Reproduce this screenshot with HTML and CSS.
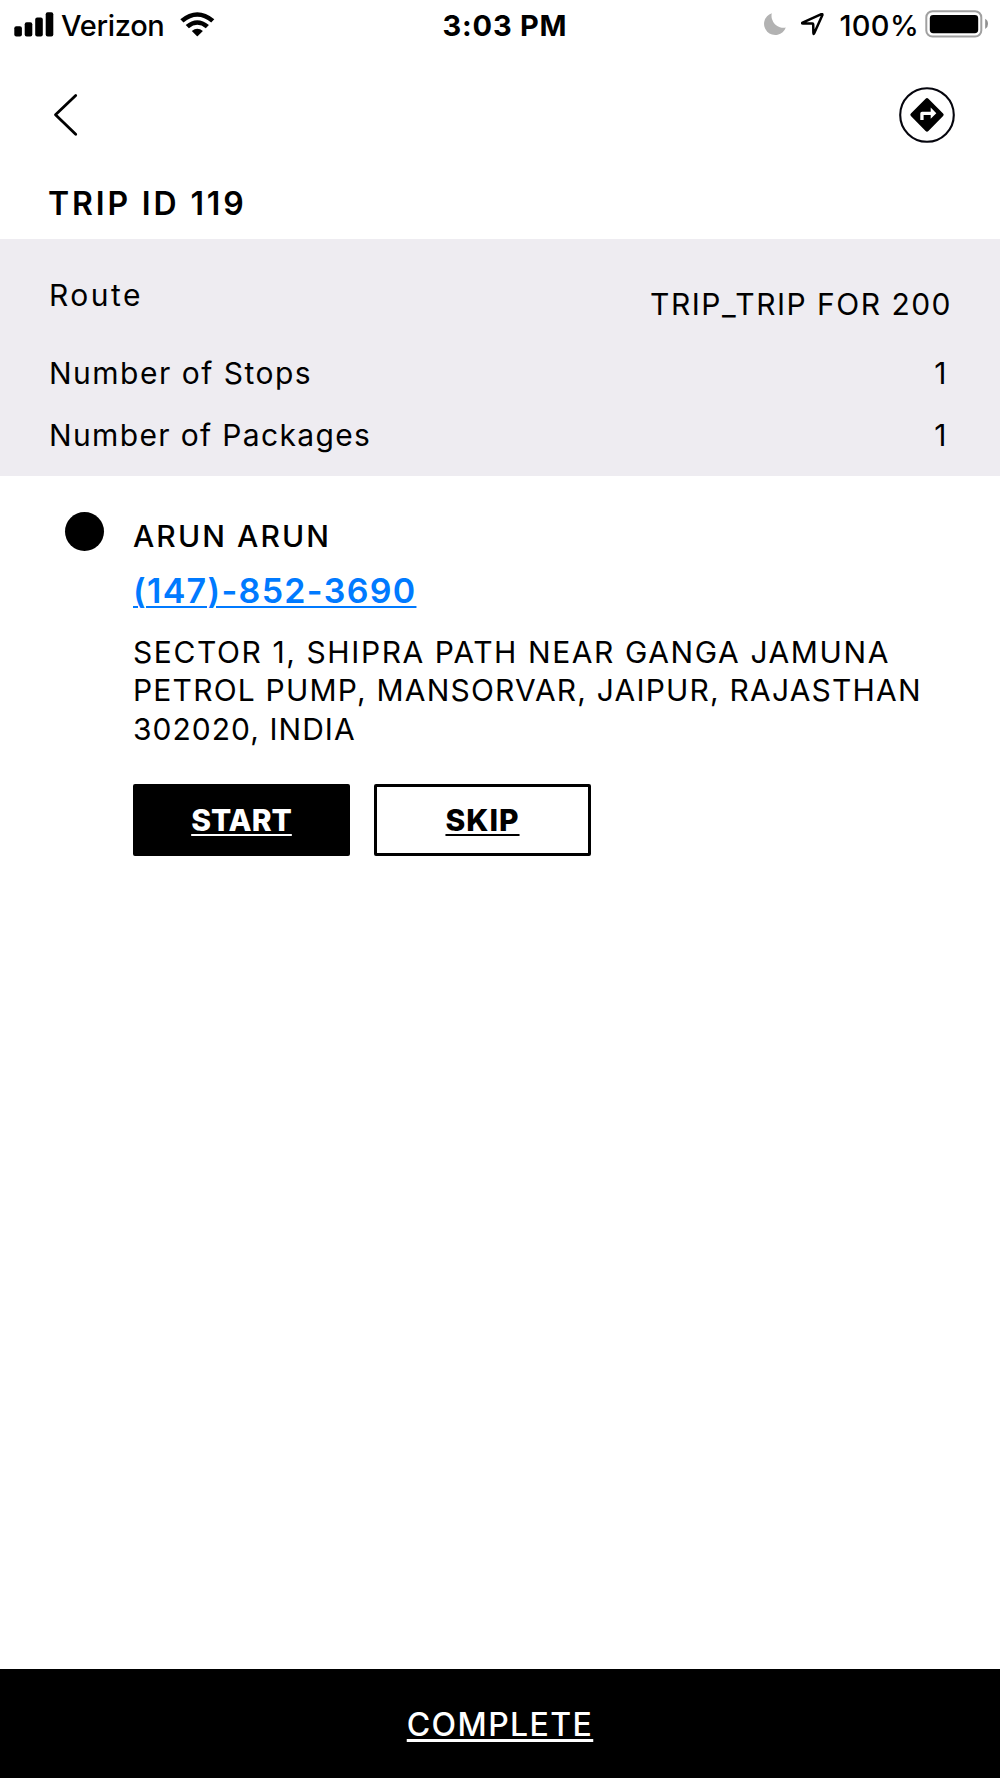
FILE: index.html
```html
<!DOCTYPE html>
<html lang="en">
<head>
<meta charset="utf-8">
<title>Trip ID 119</title>
<link rel="stylesheet" href="styles.css">
</head>
<body>
<div class="screen">
  <header class="status">
    <div class="status-left">
      <svg class="signal" width="40" height="25" viewBox="0 0 40 25"><rect x="0.3" y="14.3" width="7.6" height="10.2" rx="2"/><rect x="10.7" y="10.2" width="7.6" height="14.3" rx="2"/><rect x="21.2" y="5.4" width="7.6" height="19.1" rx="2"/><rect x="31.7" y="0.3" width="7.6" height="24.2" rx="2"/></svg>
      <span class="carrier">Verizon</span>
      <svg class="wifi" width="35" height="25" viewBox="0 0 35 25"><path d="M0.3 7.2 Q17.3 -6.8 34.3 7.2 L31.2 10.6 Q17.3 -1 3.5 10.6Z"/><path d="M5.7 13 Q17.3 3.6 28.9 13 L25.8 16.3 Q17.3 9.4 8.9 16.3Z"/><path d="M11.8 19 Q17.3 14.6 22.9 19 L17.8 24.1 Q17.3 24.5 16.8 24.1Z"/></svg>
    </div>
    <span class="time">3:03 PM</span>
    <div class="status-right">
      <svg class="moon" width="22" height="23" viewBox="0 0 22 23"><path d="M7.8 0.2 A11.2 11.2 0 1 0 21.8 14.6 A12 12 0 0 1 7.8 0.2Z"/></svg>
      <svg class="location" width="23" height="23" viewBox="0 0 23 23"><path d="M1.6 9.7 L19.8 1.3 Q22 0.4 21.2 2.6 L13.2 20.2 Q12.5 21.8 12.4 20 L12.2 11.3 Q12.2 10.6 11.5 10.6 L2 10.5 Q0.3 10.3 1.6 9.7Z"/></svg>
      <span class="percent">100%</span>
      <svg class="battery" width="64" height="28" viewBox="0 0 64 28"><rect x="1.3" y="1.2" width="55" height="25.4" rx="6.2" fill="none" stroke="#a0a0a0" stroke-width="2"/><rect x="4.8" y="5" width="48.4" height="18.2" rx="3.4"/><path d="M60.2 8.8 Q63 10.4 63 13.9 Q63 17.4 60.2 19Z" fill="#909090"/></svg>
    </div>
  </header>
  <nav class="nav">
    <svg width="26" height="44" viewBox="0 0 26 44"><path class="chevron" d="M23.7 2.5 L3.5 21.8 L23.7 41.2"/></svg>
    <svg width="56" height="56" viewBox="0 0 56 56"><circle cx="28" cy="28" r="26.8" fill="none" stroke="#05050d" stroke-width="2.1"/><path d="M26.6 11.7 Q28 10.3 29.4 11.7 L44.1 26.5 Q45.4 27.8 44.1 29.1 L29.4 44 Q28 45.4 26.6 44 L11.9 29.1 Q10.6 27.8 11.9 26.5Z"/><path d="M21.3 32.9 V26.4 Q21.3 24.7 23 24.7 H31.7 V20.6 L37.3 26.2 L31.7 31.7 V28 H24.6 V32.9Z" fill="#fff"/></svg>
  </nav>
  <h1 class="title">TRIP ID 119</h1>
  <dl class="summary">
    <div class="row row-route"><dt class="route-label">Route</dt><dd class="route-name">TRIP_TRIP FOR 200</dd></div>
    <div class="row"><dt>Number of Stops</dt><dd class="count">1</dd></div>
    <div class="row"><dt class="packages-label">Number of Packages</dt><dd class="count">1</dd></div>
  </dl>
  <main class="stop">
    <span class="dot"></span>
    <div class="details">
      <h2 class="name">ARUN ARUN</h2>
      <a class="phone">(147)-852-3690</a>
      <p class="address"><span class="line-1">SECTOR 1, SHIPRA PATH NEAR GANGA JAMUNA</span><br><span class="line-2">PETROL PUMP, MANSORVAR, JAIPUR, RAJASTHAN</span><br><span class="line-3">302020, INDIA</span></p>
      <div class="actions"><button class="button start">START</button><button class="button skip">SKIP</button></div>
    </div>
  </main>
  <footer class="complete"><span>COMPLETE</span></footer>
</div>
</body>
</html>
```
FILE: styles.css
```css
* { box-sizing: border-box; }
body { margin: 0; background: #fff; color: #000; font-family: Inter, "Open Sans", sans-serif; }
h1, h2, p, dl, dd { margin: 0; }
svg { display: block; flex: none; }

.screen { height: 1778px; display: flex; flex-direction: column; }

.status { height: 50px; display: grid; grid-template-columns: 1fr auto 1fr; padding: 0 11px 0 14px; font-size: 29px; line-height: 52px; font-weight: 550; white-space: nowrap; }
.status-left, .status-right { display: flex; align-items: flex-start; }
.status-right { justify-content: flex-end; }
.signal { margin-top: 12px; }
.carrier { margin-left: 7px; letter-spacing: -0.3px; }
.wifi { margin: 12px 0 0 15px; }
.time { font-weight: 700; letter-spacing: 0.78px; padding-left: 7px; }
.moon { margin-top: 13px; fill: #b2b2b2; }
.location { margin: 13px 0 0 15px; fill: none; stroke: #000; stroke-width: 2.5; stroke-linejoin: round; }
.percent { margin-left: 16px; letter-spacing: 0.3px; }
.battery { margin: 10px 0 0 6px; }

.nav { height: 133.5px; display: flex; justify-content: space-between; padding: 37px 45px 0 52px; }
.nav svg:first-child { margin-top: 6px; }
.chevron { fill: none; stroke: #000; stroke-width: 2.8; stroke-linecap: round; stroke-linejoin: round; }

.title { height: 55.5px; padding-left: 48px; font-size: 32px; line-height: 40px; font-weight: 600; letter-spacing: 2.85px; }

.summary { height: 237px; padding: 36px 48px 0 49px; background: #eeecf1; font-size: 30px; line-height: 40px; }
.row { height: 62.5px; display: flex; justify-content: space-between; letter-spacing: 1.5px; }
.row-route { height: 77.5px; }
.route-label { letter-spacing: 2.47px; }
.route-name { padding-top: 9px; letter-spacing: 1.48px; }
.packages-label { letter-spacing: 1.35px; }
.count { padding-right: 4px; }

.stop { flex: 1; display: flex; padding: 36px 49px 0 65px; }
.dot { flex: none; width: 39px; height: 39px; border-radius: 50%; background: #000; }
.details { padding: 4px 0 0 29px; }
.name { font-size: 30px; line-height: 40px; font-weight: 550; letter-spacing: 2.1px; }
.phone { display: block; width: max-content; margin-top: 12.6px; font-size: 34px; line-height: 44px; font-weight: 600; letter-spacing: 1.3px; color: #007aff; text-decoration: underline; text-decoration-thickness: 2px; text-underline-offset: 3px; }
.address { margin-top: 20.4px; font-size: 30px; line-height: 38.4px; white-space: nowrap; }
.line-1 { letter-spacing: 1.59px; }
.line-2 { letter-spacing: 1.2px; }
.line-3 { letter-spacing: 1.03px; }
.actions { display: flex; gap: 24px; margin-top: 35.8px; }
.button { width: 217px; height: 72px; padding: 0; border: 3px solid #000; border-radius: 2px; font: 800 30px/66px Inter, sans-serif; text-decoration: underline; text-decoration-thickness: 2px; text-underline-offset: 3px; text-decoration-skip-ink: none; }
.start { background: #000; color: #fff; }
.skip { background: #fff; color: #000; letter-spacing: 1px; }

.complete { height: 109px; padding-top: 36px; background: #000; color: #fff; text-align: center; font-size: 32px; line-height: 40px; font-weight: 550; letter-spacing: 1.4px; text-decoration: underline; text-decoration-thickness: 2.5px; text-underline-offset: 3px; text-decoration-skip-ink: none; }
```
